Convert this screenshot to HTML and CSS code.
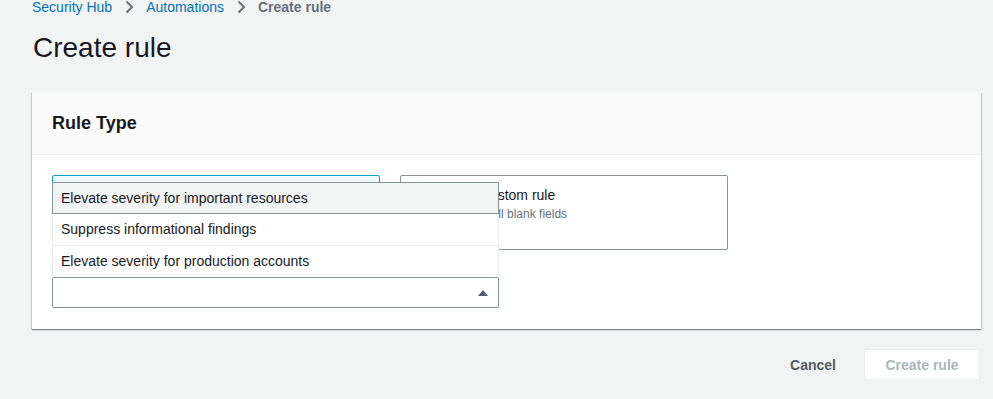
FILE: index.html
```html
<!DOCTYPE html>
<html lang="en">
<head>
  <meta charset="UTF-8">
  <title>Create rule</title>
  <link rel="stylesheet" href="styles.css">
</head>
<body>

<nav class="breadcrumbs">
  <a href="#">Security Hub</a>
  <svg class="chevron" width="16" height="16" viewBox="0 0 16 16"><path d="M5.5 2.5 11 8l-5.5 5.5" fill="none" stroke="#687078" stroke-width="2"/></svg>
  <a href="#">Automations</a>
  <svg class="chevron" width="16" height="16" viewBox="0 0 16 16"><path d="M5.5 2.5 11 8l-5.5 5.5" fill="none" stroke="#687078" stroke-width="2"/></svg>
  <span class="current">Create rule</span>
</nav>

<h1>Create rule</h1>

<section class="panel">
  <div class="panel-header">
    <h2>Rule Type</h2>
  </div>
  <div class="panel-body">
    <div class="tiles">
      <div class="tile selected">
        <div class="tile-title">Create rule from template</div>
        <div class="tile-desc">Start from a predefined rule</div>
      </div>
      <div class="tile">
        <div class="tile-title">Create custom rule</div>
        <div class="tile-desc">Complete all blank fields</div>
      </div>
    </div>

    <div class="field">
      <label>Template</label>
      <div class="select-wrap">
        <ul class="dropdown">
          <li class="active">Elevate severity for important resources</li>
          <li>Suppress informational findings</li>
          <li>Elevate severity for production accounts</li>
        </ul>
        <div class="select">
          <svg width="12" height="8" viewBox="0 0 12 8"><path d="M1 7 6 1l5 6z" fill="#545b64"/></svg>
        </div>
      </div>
    </div>
  </div>
</section>

<div class="actions">
  <button class="link-btn">Cancel</button>
  <button class="btn" disabled>Create rule</button>
</div>

</body>
</html>
```

FILE: styles.css
```css
body {
  font-family: "Liberation Sans", Arial, sans-serif;
  font-size: 14px;
  color: #16191f;
  background: #f2f3f3;
  margin: 0;
  padding: 0 12px 0 32px;
}

.breadcrumbs {
  display: flex;
  align-items: center;
  gap: 9px;
  margin-top: -3px;
  line-height: 20px;
}

.breadcrumbs a {
  color: #0073bb;
  text-decoration: none;
}

.breadcrumbs .current {
  color: #687078;
  font-weight: bold;
}

.chevron {
  display: block;
}

h1 {
  font-size: 28px;
  font-weight: normal;
  line-height: 36px;
  margin: 13px 0 26px 1px;
}

.panel {
  background: white;
  box-shadow: 0 1px 1px 0 rgba(0,28,36,0.3), 1px 1px 1px 0 rgba(0,28,36,0.15), -1px 1px 1px 0 rgba(0,28,36,0.15);
}

.panel-header {
  background: #fafafa;
  border-bottom: 1px solid #eaeded;
  padding: 20px;
}

h2 {
  font-size: 18px;
  line-height: 22px;
  margin: 0;
}

.panel-body {
  padding: 20px 20px 21px;
}

.tiles {
  display: flex;
  gap: 20px;
}

.tile {
  width: 328px;
  height: 75px;
  box-sizing: border-box;
  border: 1px solid #879596;
  border-radius: 2px;
  padding: 9px 20px 0 36px;
}

.tile.selected {
  border-color: #00a1c9;
  background: #f1faff;
}

.tile-title {
  line-height: 20px;
  font-size: 14px;
}

.tile-desc {
  font-size: 12px;
  line-height: 18px;
  color: #687078;
}

.field {
  margin-top: 5px;
}

.field label {
  display: block;
  font-weight: bold;
  line-height: 22px;
}

.select-wrap {
  position: relative;
  width: 447px;
}

.select {
  height: 31px;
  box-sizing: border-box;
  border: 1px solid #879596;
  border-radius: 2px;
  background: white;
  display: flex;
  align-items: center;
  justify-content: flex-end;
  padding-right: 9px;
}

.dropdown {
  position: absolute;
  left: 0;
  right: 0;
  bottom: 100%;
  margin: 0;
  padding: 0;
  list-style: none;
  background: white;
  border-left: 1px solid #eaeded;
  border-right: 1px solid #eaeded;
}

.dropdown li {
  line-height: 31px;
  padding: 0 8px;
  border-top: 1px solid #eaeded;
}

.dropdown li.active {
  line-height: 30px;
  background: #f2f3f3;
  border: 1px solid #879596;
  margin: 0 -1px;
  padding: 0 8px;
}

.dropdown li.active + li {
  border-top: none;
}

.actions {
  display: flex;
  justify-content: flex-end;
  align-items: center;
  gap: 8px;
  margin-top: 20px;
  padding-right: 1px;
}

.link-btn,
.btn {
  font-family: inherit;
  font-size: 14px;
  font-weight: bold;
  height: 31px;
  border-radius: 2px;
}

.link-btn {
  background: none;
  border: none;
  color: #545b64;
  padding: 0 20px;
  cursor: pointer;
}

.btn {
  width: 116px;
  background: white;
  border: 1px solid #eaeded;
  color: #aab7b8;
}
```
